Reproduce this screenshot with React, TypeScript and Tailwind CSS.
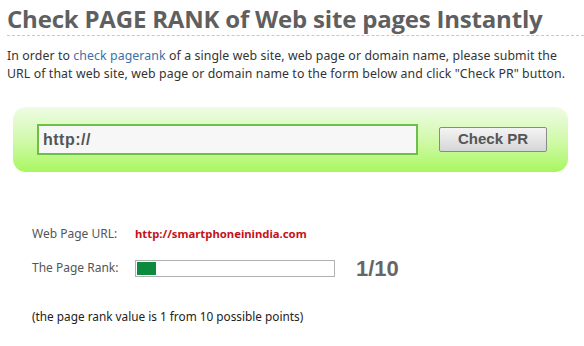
export default function App() {
  return (
    <div className="w-[584px] h-[346px] bg-white overflow-hidden" style={{ fontFamily: '"Noto Sans", sans-serif' }}>
      <div className="pl-[7px] pt-[2px]">
        <h1 className="text-[24px] leading-[34px] font-bold text-[#5f5f5f] tracking-[-0.2px]" style={{ fontFamily: '"Open Sans", sans-serif' }}>
          Check PAGE RANK of Web site pages Instantly
        </h1>
        <div className="border-b border-dashed border-[#c8c8c8] mt-[-1px]" />
        <p className="mt-[11px] text-[12.3px] leading-[18px] text-[#333] tracking-[0.1px] whitespace-nowrap">
          In order to <span className="text-[#3d6fa8]">check pagerank</span> of a single web site, web page or domain name, please submit the
          <br />
          URL of that web site, web page or domain name to the form below and click "Check PR" button.
        </p>
      </div>
      <div className="ml-[13px] mt-[24px] w-[555px] h-[65px] rounded-[13px] bg-gradient-to-b from-[#eefce4] via-[#d2f9ab] to-[#a8f75c] flex items-center pl-[24px]">
        <div className="w-[381px] h-[31px] border-2 border-[#6cc04a] bg-[#f7f7f7] flex items-center pl-[4px]">
          <span className="text-[16px] tracking-[0.5px] font-bold text-[#555]" style={{ fontFamily: '"Liberation Sans", sans-serif' }}>http://</span>
        </div>
        <div className="ml-[21px] w-[108px] h-[25px] border border-[#8a8a8a] rounded-[2px] bg-gradient-to-b from-[#f4f4f4] to-[#d6d6d6] flex items-center justify-center">
          <span className="text-[15px] font-bold text-[#555]" style={{ fontFamily: '"Liberation Sans", sans-serif' }}>Check PR</span>
        </div>
      </div>
      <div className="pl-[32px] mt-[52px]">
        <div className="flex items-center h-[20px]">
          <span className="w-[103px] text-[12px] text-[#555]">Web Page URL:</span>
          <span className="text-[11.3px] font-bold text-[#c4121a]">http://smartphoneinindia.com</span>
        </div>
        <div className="flex items-center mt-[14px] h-[20px]">
          <span className="w-[103px] text-[12px] text-[#555]">The Page Rank:</span>
          <div className="w-[200px] h-[17px] border border-[#b0b0b0] p-[1px] bg-white">
            <div className="w-[19px] h-full bg-[#0c8a3e]" />
          </div>
          <span className="ml-[21px] text-[22px] font-bold text-[#666]" style={{ fontFamily: '"Liberation Sans", sans-serif' }}>1/10</span>
        </div>
        <p className="mt-[30px] text-[11.8px] text-[#222]">(the page rank value is 1 from 10 possible points)</p>
      </div>
    </div>
  );
}
